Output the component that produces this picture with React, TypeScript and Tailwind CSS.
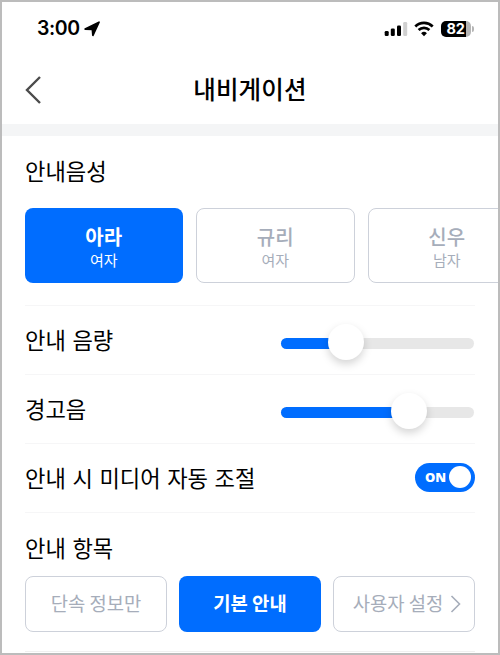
import React from "react";

const voices = [
  { name: "아라", gender: "여자", active: true },
  { name: "규리", gender: "여자", active: false },
  { name: "신우", gender: "남자", active: false },
];

function StatusBar() {
  return (
    <div className="flex h-[54px] items-center pl-[35px] pr-[24px] text-black">
      <span className="font-['Inter'] text-[19.5px] leading-none font-semibold tracking-[-0.4px]">3:00</span>
      <svg className="ml-[4px]" width="16" height="16" viewBox="0 0 16 16">
        <path d="M15 1.2 8.9 14.3 8.4 8.3 1.2 8Z" fill="black" stroke="black" strokeWidth="1.8" strokeLinejoin="round" />
      </svg>
      <div className="ml-auto flex items-center">
        <svg width="24" height="16" viewBox="0 0 24 16">
          <rect x="0.7" y="10" width="4" height="5" rx="1.3" />
          <rect x="6.8" y="7.5" width="4" height="7.5" rx="1.3" />
          <rect x="13" y="4.5" width="4" height="10.5" rx="1.3" />
          <rect x="19.2" y="1" width="4" height="14" rx="1.3" fill="#d0d0d0" />
        </svg>
        <svg className="ml-[6px]" width="20" height="16" viewBox="0 0 20 16" fill="none" stroke="black" strokeWidth="2.7">
          <path d="M1.3 5.4a12.6 12.6 0 0 1 17.4 0" />
          <path d="M4.6 9.1a7.9 7.9 0 0 1 10.8 0" />
          <path d="M10 15.2 7.1 12.2a4.2 4.2 0 0 1 5.8 0Z" fill="black" stroke="none" />
        </svg>
        <div className="ml-[7px] flex h-[16px] w-[30px] items-center justify-center overflow-hidden rounded-[5px] bg-[linear-gradient(90deg,#000_82%,#b5b5b5_82%)] pr-px">
          <span className="font-['Inter'] text-[14.5px] leading-none font-bold tracking-[-0.2px] text-white">82</span>
        </div>
        <div className="ml-px h-[6px] w-[2px] rounded-r-full bg-[#b5b5b5]" />
      </div>
    </div>
  );
}

function Slider({ value }: { value: number }) {
  return (
    <div className="relative mr-px mt-[7px] h-[11px] w-[193px] rounded-full bg-[#e7e7e7]">
      <div className="h-full rounded-full bg-[#006dff]" style={{ width: `${value}%` }} />
      <div
        className="absolute top-[-14px] size-[36px] -translate-x-1/2 rounded-full bg-white shadow-[0_4px_9px_rgba(0,0,0,0.17)]"
        style={{ left: `${value}%` }}
      />
    </div>
  );
}

function Row({ label, children }: { label: string; children: React.ReactNode }) {
  return (
    <div className="flex h-[69px] items-center justify-between border-t border-[#f6f6f7]">
      <span className="pb-[2px] text-[22.2px] leading-none [word-spacing:1.6px]">{label}</span>
      {children}
    </div>
  );
}

export default function App() {
  return (
    <div className="h-[655px] w-[500px] overflow-hidden border-2 border-[#bcbcbc] bg-white font-['Noto_Sans_CJK_KR',sans-serif] text-black">
      <StatusBar />
      <header className="grid h-[68px] grid-cols-[1fr_auto_1fr] items-center pl-[22px] pr-[22px]">
        <svg width="20" height="30" viewBox="0 0 20 30" fill="none" stroke="#4b4b4b" strokeWidth="2.4">
          <path d="M16 2 3 15l13 13" />
        </svg>
        <h1 className="pb-[2px] text-[24.5px] leading-none font-medium tracking-[0.2px]">내비게이션</h1>
      </header>
      <div className="h-[12px] bg-[#f4f5f6]" />
      <main className="pl-[23px] pr-[23px]">
        <h2 className="flex h-[70px] items-center pb-px text-[22.2px] leading-none">안내음성</h2>
        <div className="-ml-[0.5px] -mr-[23px] flex gap-[13px] overflow-hidden pt-[2px]">
          {voices.map((v) => (
            <button
              key={v.name}
              className={`flex h-[75px] w-[158.5px] shrink-0 flex-col items-center justify-center rounded-[8px] pt-[4px] ${
                v.active ? "bg-[#006dff] text-white" : "border border-[#cdd1da] text-[#a6adba]"
              }`}
            >
              <span className={`text-[20px] leading-[25px] ${v.active ? "font-bold" : "font-medium"}`}>{v.name}</span>
              <span className="text-[15px] leading-[22px]">{v.gender}</span>
            </button>
          ))}
        </div>
        <div className="mt-[22px]">
          <Row label="안내 음량"><Slider value={33.5} /></Row>
          <Row label="경고음"><Slider value={66.5} /></Row>
          <Row label="안내 시 미디어 자동 조절">
            <div className="mb-[2px] flex h-[29px] w-[60px] items-center justify-between rounded-full bg-[#006dff] pl-[10px] pr-[4px]">
              <span className="font-['Open_Sans'] text-[13px] leading-none font-extrabold text-white">ON</span>
              <span className="size-[22px] rounded-full bg-white" />
            </div>
          </Row>
        </div>
        <div className="h-[139px] border-t border-[#f6f6f7]">
          <h2 className="flex h-[63px] items-center pt-[6px] text-[22.2px] leading-none [word-spacing:1.6px]">안내 항목</h2>
          <div className="grid grid-cols-3 gap-[12px] text-[18.8px] whitespace-nowrap [word-spacing:1.8px]">
            <button className="h-[56px] rounded-[8px] border border-[#cdd1da] pb-[2px] text-[#a6adba]">단속 정보만</button>
            <button className="h-[56px] rounded-[8px] bg-[#006dff] pb-[2px] font-bold text-white">기본 안내</button>
            <button className="flex h-[56px] items-center justify-center gap-[7px] rounded-[8px] border border-[#cdd1da] pl-[6px] text-[#a6adba]">
              <span className="pb-[2px]">사용자 설정</span>
              <svg width="11" height="18" viewBox="0 0 11 18" fill="none" stroke="#a6adba" strokeWidth="1.6">
                <path d="m1.5 1 8 8-8 8" />
              </svg>
            </button>
          </div>
        </div>
        <div className="border-t border-[#f0f0f0]" />
      </main>
    </div>
  );
}
